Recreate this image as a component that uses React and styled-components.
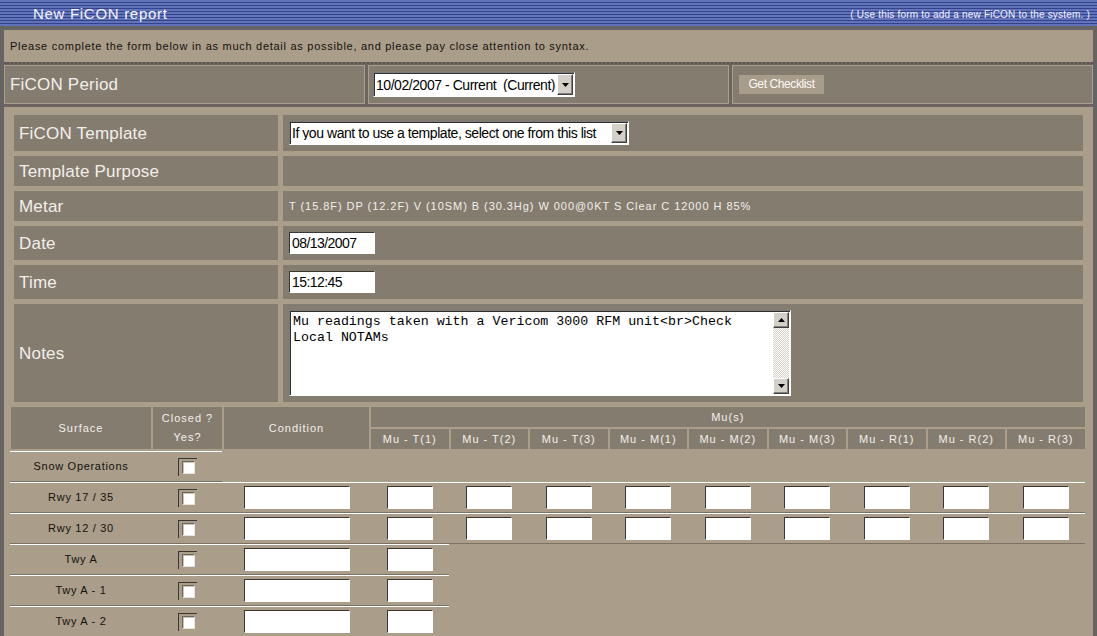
import React from 'react';
import styled, { createGlobalStyle } from 'styled-components';

const C = {
  tan: '#aa9d89',
  cell: '#857c70',
  frame: '#666462',
  dark: '#6b655d',
  cellEdge: '#a99f90',
  light: '#f2efea',
  ink: '#141210',
  btn: '#d4d0c8',
};

const SANS = '"Liberation Sans", Arial, sans-serif';

const GlobalStyle = createGlobalStyle`
  html, body { margin: 0; padding: 0; background: ${C.tan}; overflow: hidden; }
  body { font-family: ${SANS}; }
  *, *::before, *::after { box-sizing: border-box; }
`;

const Page = styled.div`
  width: 1097px;
  min-height: 636px;
  display: flex;
  flex-direction: column;
  background: ${C.tan};
`;

const TitleBar = styled.header`
  height: 26px;
  display: flex;
  align-items: center;
  justify-content: space-between;
  padding: 0 7px 0 33px;
  background: repeating-linear-gradient(
    to bottom,
    #6073bb 0px,
    #6073bb 2px,
    #34428a 2px,
    #34428a 3px
  );
`;

const Title = styled.h1`
  margin: 0;
  font: 400 15px/1 ${SANS};
  letter-spacing: 0.7px;
  color: #f4f4ff;
`;

const Hint = styled.span`
  padding-top: 4px;
  font: 400 10px/1 ${SANS};
  letter-spacing: 0.2px;
  color: #f0f0ff;
`;

const Frame = styled.main`
  flex: 1;
  display: flex;
  flex-direction: column;
  border: 4px solid ${C.frame};
  border-bottom: none;
`;

const Intro = styled.p`
  margin: 0;
  height: 32px;
  display: flex;
  align-items: center;
  padding-left: 6px;
  font: 400 11px/1 ${SANS};
  letter-spacing: 0.72px;
  color: ${C.ink};
`;

const PeriodBar = styled.div`
  display: grid;
  grid-template-columns: repeat(3, 1fr);
  column-gap: 3px;
  padding: 1px 0 3px;
  background: ${C.dark};
  border-top: 2px dotted #5a544c;
`;

const PeriodCell = styled.div`
  height: 39px;
  display: flex;
  align-items: center;
  padding: 0 ${(p) => p.$pad}px;
  background: ${C.cell};
  border: 1px solid ${C.cellEdge};
`;

const BigLabel = styled.span`
  font: 400 17px/1 ${SANS};
  letter-spacing: 0.2px;
  color: ${C.light};
`;

const ChecklistButton = styled.button`
  width: 85px;
  height: 19px;
  padding: 0;
  border: none;
  background: #a89c8a;
  color: #fbfaf7;
  font: 400 12px/19px ${SANS};
  letter-spacing: -0.4px;
  cursor: pointer;
`;

const SelectBox = styled.div`
  display: inline-flex;
  width: ${(p) => p.$w}px;
  height: ${(p) => p.$h}px;
  padding: 1px;
  background: #fff;
  border: 1px solid;
  border-color: #7a7a7a #fff #fff #7a7a7a;
  box-shadow: inset 1px 1px 0 #303030;
`;

const SelectField = styled.select`
  appearance: none;
  flex: 1;
  min-width: 0;
  border: none;
  outline: none;
  background: transparent;
  padding: 0 1px;
  font: 400 14px/1 ${SANS};
  letter-spacing: -0.45px;
  color: #000;
`;

const DropButton = styled.span`
  width: 16px;
  display: flex;
  align-items: center;
  justify-content: center;
  background: ${C.btn};
  border: 1px solid;
  border-color: #fff #404040 #404040 #fff;
  box-shadow: inset -1px -1px 0 #808080;
`;

const Arrow = ({ up }) => (
  <svg width="7" height="4" viewBox="0 0 7 4" style={up ? { transform: 'rotate(180deg)' } : undefined}>
    <path d="M0 0h7L3.5 4z" fill="#000" />
  </svg>
);

const FieldTable = styled.section`
  display: grid;
  grid-template-columns: 264px 800px;
  grid-template-rows: 36px 30px 30px 34px 34px 98px;
  gap: 5px;
  padding: 8px 10px 5px;
`;

const FieldLabel = styled.div`
  display: flex;
  align-items: center;
  padding-left: 5px;
  background: ${C.cell};
  font: 400 17px/1 ${SANS};
  letter-spacing: 0.2px;
  color: ${C.light};
`;

const FieldValue = styled.div`
  display: flex;
  align-items: center;
  padding-left: 6px;
  background: ${C.cell};
`;

const MetarText = styled.span`
  font: 400 11px/1 ${SANS};
  letter-spacing: 0.95px;
  color: ${C.light};
`;

const TextInput = styled.input`
  width: ${(p) => p.$w}px;
  height: ${(p) => p.$h}px;
  padding: 0 2px;
  border: 1px solid;
  border-color: #3a3632 #fff #fff #3a3632;
  background: #fff;
  font: 400 14px/1 ${SANS};
  letter-spacing: -0.55px;
  color: #000;
  outline: none;
`;

const NotesBox = styled.div`
  display: flex;
  width: 502px;
  height: 86px;
  background: #fff;
  border: 1px solid;
  border-color: #7a7a7a #fff #fff #7a7a7a;
  box-shadow: inset 1px 1px 0 #303030;
  padding: 1px;
`;

const NotesText = styled.textarea`
  flex: 1;
  border: none;
  outline: none;
  resize: none;
  overflow: hidden;
  padding: 2px 2px;
  font: 400 13.3px/16px "Liberation Mono", "Courier New", monospace;
  color: #000;
  background: #fff;
`;

const ScrollBar = styled.div`
  width: 16px;
  display: flex;
  flex-direction: column;
`;

const ScrollButton = styled.span`
  height: 16px;
  display: flex;
  align-items: center;
  justify-content: center;
  background: ${C.btn};
  border: 1px solid;
  border-color: #fff #404040 #404040 #fff;
  box-shadow: inset -1px -1px 0 #808080;
`;

const ScrollTrack = styled.span`
  flex: 1;
  background: repeating-conic-gradient(#fff 0 25%, #d4d0c8 0 50%) 0 0 / 2px 2px;
`;

const MuTable = styled.section`
  margin-left: 7px;
  display: flex;
  flex-direction: column;
`;

const HeadGrid = styled.div`
  display: grid;
  grid-template-columns: 140px 69px 145px repeat(9, 77.5px);
  grid-template-rows: 20px 20px;
  gap: 2px;
`;

const HeadCell = styled.div`
  grid-row: span ${(p) => p.$rows || 1};
  grid-column: span ${(p) => p.$cols || 1};
  display: flex;
  flex-direction: column;
  align-items: center;
  justify-content: center;
  background: ${C.cell};
  font: 400 11px/19px ${SANS};
  letter-spacing: 1px;
  color: ${C.light};
  text-align: center;
`;

const RowList = styled.div`
  display: flex;
  flex-direction: column;
  padding-top: 2px;
`;

const BodyRow = styled.div`
  display: grid;
  grid-template-columns: ${(p) =>
    p.$mu === 0 ? '140px 69px' : `140px 69px 145px repeat(${p.$mu}, 77.5px)`};
  column-gap: 2px;
  align-items: center;
  width: max-content;
  height: 31px;
  margin-left: -1px;
  padding-left: 1px;
  border-top: 1px solid #fff;
  border-bottom: 1px solid #7b7266;
`;

const Surface = styled.span`
  text-align: center;
  font: 400 11px/1 ${SANS};
  letter-spacing: 0.7px;
  color: ${C.ink};
`;

const Centered = styled.span`
  display: flex;
  justify-content: center;
`;

const CheckFrame = styled.span`
  display: inline-flex;
  width: 19px;
  height: 18px;
  padding: 2px 0 0 3px;
  border-top: 1px solid #3b362f;
  border-left: 1px solid #3b362f;
`;

const CheckBox = styled.input`
  appearance: none;
  margin: 0;
  width: 13px;
  height: 13px;
  background: #fff;
  border: 1px solid;
  border-color: #6e665b #e8e4dc #e8e4dc #6e665b;
  box-shadow: inset 1px 1px 0 #c8c3ba;
`;

const MU_HEADS = ['T(1)', 'T(2)', 'T(3)', 'M(1)', 'M(2)', 'M(3)', 'R(1)', 'R(2)', 'R(3)'];

const ROWS = [
  { name: 'Snow Operations', mu: 0 },
  { name: 'Rwy 17 / 35', mu: 9 },
  { name: 'Rwy 12 / 30', mu: 9 },
  { name: 'Twy A', mu: 1 },
  { name: 'Twy A - 1', mu: 1 },
  { name: 'Twy A - 2', mu: 1 },
];

const Select = ({ value, w, h }) => (
  <SelectBox $w={w} $h={h}>
    <SelectField defaultValue={value}>
      <option>{value}</option>
    </SelectField>
    <DropButton>
      <Arrow />
    </DropButton>
  </SelectBox>
);

export default function App() {
  return (
    <>
      <GlobalStyle />
      <Page>
        <TitleBar>
          <Title>New FiCON report</Title>
          <Hint>( Use this form to add a new FiCON to the system. )</Hint>
        </TitleBar>
        <Frame>
          <Intro>
            Please complete the form below in as much detail as possible, and please pay close attention to syntax.
          </Intro>
          <PeriodBar>
            <PeriodCell $pad={5}>
              <BigLabel>FiCON Period</BigLabel>
            </PeriodCell>
            <PeriodCell $pad={4}>
              <Select value={'10/02/2007 - Current\u00a0 (Current)'} w={202} h={25} />
            </PeriodCell>
            <PeriodCell $pad={6}>
              <ChecklistButton>Get Checklist</ChecklistButton>
            </PeriodCell>
          </PeriodBar>

          <FieldTable>
            <FieldLabel>FiCON Template</FieldLabel>
            <FieldValue>
              <Select value="If you want to use a template, select one from this list" w={340} h={24} />
            </FieldValue>
            <FieldLabel>Template Purpose</FieldLabel>
            <FieldValue />
            <FieldLabel>Metar</FieldLabel>
            <FieldValue>
              <MetarText>T (15.8F) DP (12.2F) V (10SM) B (30.3Hg) W 000@0KT S Clear C 12000 H 85%</MetarText>
            </FieldValue>
            <FieldLabel>Date</FieldLabel>
            <FieldValue>
              <TextInput $w={86} $h={22} defaultValue="08/13/2007" />
            </FieldValue>
            <FieldLabel>Time</FieldLabel>
            <FieldValue>
              <TextInput $w={86} $h={22} defaultValue="15:12:45" />
            </FieldValue>
            <FieldLabel>Notes</FieldLabel>
            <FieldValue>
              <NotesBox>
                <NotesText defaultValue="Mu readings taken with a Vericom 3000 RFM unit<br>Check Local NOTAMs" />
                <ScrollBar>
                  <ScrollButton>
                    <Arrow up />
                  </ScrollButton>
                  <ScrollTrack />
                  <ScrollButton>
                    <Arrow />
                  </ScrollButton>
                </ScrollBar>
              </NotesBox>
            </FieldValue>
          </FieldTable>

          <MuTable>
            <HeadGrid>
              <HeadCell $rows={2}>Surface</HeadCell>
              <HeadCell $rows={2}>
                <span>Closed ?</span>
                <span>Yes?</span>
              </HeadCell>
              <HeadCell $rows={2}>Condition</HeadCell>
              <HeadCell $cols={9}>Mu(s)</HeadCell>
              {MU_HEADS.map((m) => (
                <HeadCell key={m}>Mu - {m}</HeadCell>
              ))}
            </HeadGrid>
            <RowList>
              {ROWS.map((r) => (
                <BodyRow key={r.name} $mu={r.mu}>
                  <Surface>{r.name}</Surface>
                  <Centered>
                    <CheckFrame>
                      <CheckBox type="checkbox" />
                    </CheckFrame>
                  </Centered>
                  {r.mu > 0 && (
                    <Centered>
                      <TextInput $w={106} $h={23} />
                    </Centered>
                  )}
                  {Array.from({ length: r.mu }, (_, i) => (
                    <Centered key={i}>
                      <TextInput $w={46} $h={23} />
                    </Centered>
                  ))}
                </BodyRow>
              ))}
            </RowList>
          </MuTable>
        </Frame>
      </Page>
    </>
  );
}
